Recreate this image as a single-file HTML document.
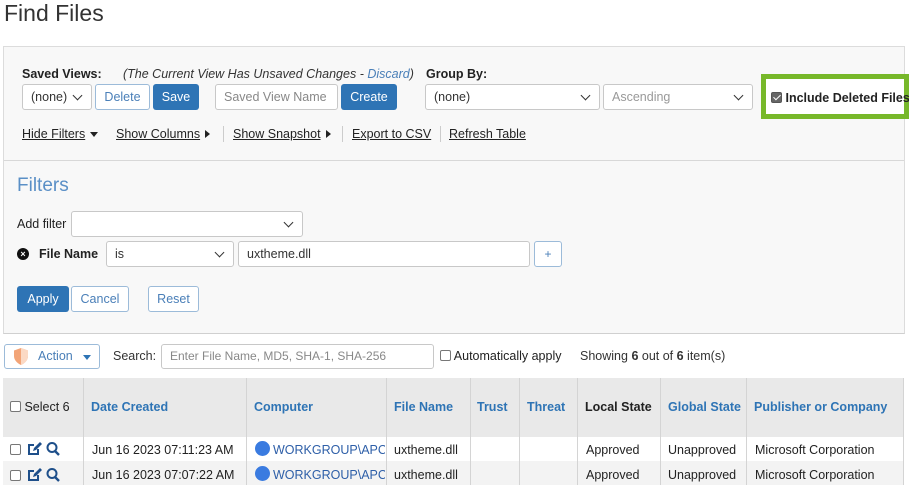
<!DOCTYPE html>
<html><head><meta charset="utf-8"><style>
*{box-sizing:border-box;margin:0;padding:0}
body{width:909px;height:485px;overflow:hidden;background:#fff;font-family:"Liberation Sans",Arial,sans-serif;font-size:12.5px;color:#222;position:relative}
.a{position:absolute;white-space:nowrap}
.sel,.inp{position:absolute;background:#fff;border:1px solid #c8c8c8;border-radius:3px;height:26px;line-height:24px;padding-left:8px;color:#333}
.sel::after{content:"";position:absolute;right:10px;top:7px;width:6px;height:6px;border-right:1.6px solid #333;border-bottom:1.6px solid #333;transform:rotate(45deg)}
.btnb{position:absolute;background:#2e74b5;color:#fff;border-radius:3px;height:26px;line-height:26px;text-align:center}
.btno{position:absolute;background:#fff;color:#4a7fb8;border:1px solid #9cbbd9;border-radius:3px;height:26px;line-height:24px;text-align:center}
.lnk{text-decoration:underline;color:#222}
.b{font-weight:bold}
.blue{color:#2e74b5}
.tri{display:inline-block;width:0;height:0;border-left:5px solid #222;border-top:4px solid transparent;border-bottom:4px solid transparent;margin-left:5px}
.trid{display:inline-block;width:0;height:0;border-top:5px solid #222;border-left:4px solid transparent;border-right:4px solid transparent;margin-left:5px;vertical-align:middle}
.sep{position:absolute;width:1px;height:16px;background:#ccc;top:126px}
.cb{display:inline-block;width:11px;height:11px;border:1px solid #777;border-radius:2px;background:#fff;vertical-align:-1px}
.vl{position:absolute;width:1px;background:#d4d4d4}
</style></head><body>
<div class="a" style="left:4px;top:0;font-size:23px;color:#333">Find Files</div>

<div class="a" style="left:3px;top:46px;width:902px;height:288px;background:#f8f8f8;border:1px solid #dcdcdc;border-bottom:1px solid #d0d0d0"></div>
<div class="a" style="left:4px;top:160px;width:900px;height:1px;background:#d8d8d8"></div>

<div class="a b" style="left:22px;top:67px">Saved Views:</div>
<div class="a" style="left:123px;top:67px;font-style:italic;color:#333">(The Current View Has Unsaved Changes - <span style="color:#4a7fb8">Discard</span>)</div>
<div class="sel" style="left:22px;top:84px;width:70px">(none)</div>
<div class="btno" style="left:95px;top:84px;width:55px">Delete</div>
<div class="btnb" style="left:153px;top:84px;width:46px">Save</div>
<div class="inp" style="left:215px;top:84px;width:123px;color:#888">Saved View Name</div>
<div class="btnb" style="left:341px;top:84px;width:56px">Create</div>

<div class="a b" style="left:426px;top:67px">Group By:</div>
<div class="sel" style="left:425px;top:84px;width:175px">(none)</div>
<div class="sel" style="left:603px;top:84px;width:150px;color:#999">Ascending</div>

<div class="a" style="left:761px;top:74px;width:148px;height:45px;border:5px solid #77b82a;background:#fff"></div>
<div class="a b" style="left:771px;top:91px;font-size:12.5px"><span class="cb" style="background:#666;border-color:#555;position:relative"><span style="position:absolute;left:3px;top:0px;width:4px;height:7px;border-right:1.5px solid #fff;border-bottom:1.5px solid #fff;transform:rotate(45deg)"></span></span> Include Deleted Files</div>

<div class="a" style="left:22px;top:127px"><span class="lnk">Hide Filters</span><span class="trid"></span></div>
<div class="a" style="left:116px;top:127px"><span class="lnk">Show Columns</span><span class="tri"></span></div>
<div class="sep" style="left:223px"></div>
<div class="a" style="left:233px;top:127px"><span class="lnk">Show Snapshot</span><span class="tri"></span></div>
<div class="sep" style="left:342px"></div>
<div class="a" style="left:352px;top:127px"><span class="lnk">Export to CSV</span></div>
<div class="sep" style="left:440px"></div>
<div class="a" style="left:449px;top:127px"><span class="lnk">Refresh Table</span></div>

<div class="a" style="left:17px;top:175px;font-size:19px;color:#5a8fc6">Filters</div>
<div class="a" style="left:17px;top:217px">Add filter</div>
<div class="sel" style="left:71px;top:211px;width:232px"></div>
<div class="a" style="left:17px;top:248px;width:12px;height:12px;border-radius:50%;background:#111;color:#fff;font-size:9px;line-height:12px;text-align:center;font-weight:bold">×</div>
<div class="a b" style="left:39px;top:247px">File Name</div>
<div class="sel" style="left:106px;top:241px;width:128px">is</div>
<div class="inp" style="left:238px;top:241px;width:292px">uxtheme.dll</div>
<div class="btno" style="left:534px;top:241px;width:28px;font-size:12px">+</div>
<div class="btnb" style="left:17px;top:286px;width:52px">Apply</div>
<div class="btno" style="left:71px;top:286px;width:58px">Cancel</div>
<div class="btno" style="left:148px;top:286px;width:51px">Reset</div>

<div class="a" style="left:4px;top:344px;width:96px;height:25px;border:1px solid #9cbbd9;border-radius:3px;background:#fff"></div>
<svg class="a" style="left:12px;top:347px" width="18" height="19" viewBox="0 0 18 19"><path d="M9 1 L16 3.5 V9 C16 13 13 16 9 18 C5 16 2 13 2 9 V3.5 Z" fill="#f2a477"/><path d="M9 1 L16 3.5 V9 C16 13 13 16 9 18 Z" fill="#fbd9c4"/></svg>
<div class="a" style="left:38px;top:349px;color:#4a7fb8">Action</div>
<div class="a" style="left:83px;top:355px;border-top:5px solid #2e74b5;border-left:4px solid transparent;border-right:4px solid transparent"></div>
<div class="a" style="left:113px;top:349px;color:#333">Search:</div>
<div class="inp" style="left:161px;top:344px;width:273px;height:25px;line-height:23px;color:#888;font-size:12px">Enter File Name, MD5, SHA-1, SHA-256</div>
<div class="a" style="left:440px;top:349px"><span class="cb"></span> Automatically apply</div>
<div class="a" style="left:580px;top:349px;color:#333">Showing <b>6</b> out of <b>6</b> item(s)</div>

<div class="a" style="left:3px;top:378px;width:900px;height:59px;background:#e9e9e9"></div>
<div class="a" style="left:3px;top:461px;width:900px;height:24px;background:#f3f3f3"></div>
<div class="vl" style="left:83px;top:378px;height:107px"></div>
<div class="vl" style="left:246px;top:378px;height:107px"></div>
<div class="vl" style="left:386px;top:378px;height:107px"></div>
<div class="vl" style="left:470px;top:378px;height:107px"></div>
<div class="vl" style="left:519px;top:378px;height:107px"></div>
<div class="vl" style="left:577px;top:378px;height:107px"></div>
<div class="vl" style="left:660px;top:378px;height:107px"></div>
<div class="vl" style="left:746px;top:378px;height:107px"></div>
<div class="vl" style="left:903px;top:378px;height:107px"></div>

<div class="a" style="left:10px;top:400px"><span class="cb"></span> Select 6</div>
<div class="a b blue" style="left:91px;top:400px">Date Created</div>
<div class="a b blue" style="left:254px;top:400px">Computer</div>
<div class="a b blue" style="left:394px;top:400px">File Name</div>
<div class="a b blue" style="left:477px;top:400px">Trust</div>
<div class="a b blue" style="left:527px;top:400px">Threat</div>
<div class="a b" style="left:585px;top:400px">Local State</div>
<div class="a b blue" style="left:668px;top:400px">Global State</div>
<div class="a b blue" style="left:754px;top:400px">Publisher or Company</div>

<div class="a" style="left:10px;top:443px"><span class="cb"></span></div>
<svg class="a" style="left:27px;top:441px" width="36" height="16" viewBox="0 0 36 16"><path d="M11 8 V13 H2 V4 H7" fill="none" stroke="#1e4f8a" stroke-width="2"/><path d="M6 10 L7 7 L13 1 L15 3 L9 9 Z" fill="#1e4f8a"/><circle cx="25" cy="6.5" r="4.5" fill="none" stroke="#1e4f8a" stroke-width="2"/><path d="M28 10 L32 14" stroke="#1e4f8a" stroke-width="2.4"/></svg>
<div class="a" style="left:92px;top:443px">Jun 16 2023 07:11:23 AM</div>
<div class="a" style="left:255px;top:441px;width:15px;height:15px;border-radius:50%;background:#3a7be0"></div>
<div class="a" style="left:273px;top:443px;width:112px;overflow:hidden;color:#2e5fa8">WORKGROUP\APC-4</div>
<div class="a" style="left:394px;top:443px">uxtheme.dll</div>
<div class="a" style="left:586px;top:443px">Approved</div>
<div class="a" style="left:668px;top:443px">Unapproved</div>
<div class="a" style="left:755px;top:443px">Microsoft Corporation</div>

<div class="a" style="left:10px;top:469px"><span class="cb"></span></div>
<svg class="a" style="left:27px;top:467px" width="36" height="16" viewBox="0 0 36 16"><path d="M11 8 V13 H2 V4 H7" fill="none" stroke="#1e4f8a" stroke-width="2"/><path d="M6 10 L7 7 L13 1 L15 3 L9 9 Z" fill="#1e4f8a"/><circle cx="25" cy="6.5" r="4.5" fill="none" stroke="#1e4f8a" stroke-width="2"/><path d="M28 10 L32 14" stroke="#1e4f8a" stroke-width="2.4"/></svg>
<div class="a" style="left:92px;top:468px">Jun 16 2023 07:07:22 AM</div>
<div class="a" style="left:255px;top:466px;width:15px;height:15px;border-radius:50%;background:#3a7be0"></div>
<div class="a" style="left:273px;top:468px;width:112px;overflow:hidden;color:#2e5fa8">WORKGROUP\APC-4</div>
<div class="a" style="left:394px;top:468px">uxtheme.dll</div>
<div class="a" style="left:586px;top:468px">Approved</div>
<div class="a" style="left:668px;top:468px">Unapproved</div>
<div class="a" style="left:755px;top:468px">Microsoft Corporation</div>
</body></html>
